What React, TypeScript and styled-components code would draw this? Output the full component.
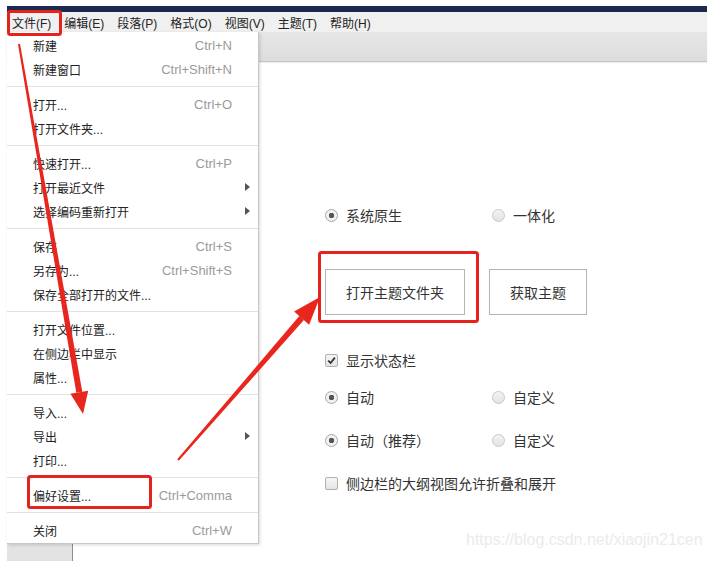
import React from 'react';
import styled, { createGlobalStyle } from 'styled-components';

const GlobalStyle = createGlobalStyle`
  html, body {
    margin: 0;
    padding: 0;
    background: #fff;
  }
  body {
    font-family: "Liberation Sans", "Noto Sans CJK SC", sans-serif;
  }
`;

type MenuEntry =
  | { kind: 'item'; label: string; shortcut?: string; submenu?: boolean }
  | { kind: 'sep' };

const topMenus = ['文件(F)', '编辑(E)', '段落(P)', '格式(O)', '视图(V)', '主题(T)', '帮助(H)'];

const fileMenu: MenuEntry[] = [
  { kind: 'item', label: '新建', shortcut: 'Ctrl+N' },
  { kind: 'item', label: '新建窗口', shortcut: 'Ctrl+Shift+N' },
  { kind: 'sep' },
  { kind: 'item', label: '打开...', shortcut: 'Ctrl+O' },
  { kind: 'item', label: '打开文件夹...' },
  { kind: 'sep' },
  { kind: 'item', label: '快速打开...', shortcut: 'Ctrl+P' },
  { kind: 'item', label: '打开最近文件', submenu: true },
  { kind: 'item', label: '选择编码重新打开', submenu: true },
  { kind: 'sep' },
  { kind: 'item', label: '保存', shortcut: 'Ctrl+S' },
  { kind: 'item', label: '另存为...', shortcut: 'Ctrl+Shift+S' },
  { kind: 'item', label: '保存全部打开的文件...' },
  { kind: 'sep' },
  { kind: 'item', label: '打开文件位置...' },
  { kind: 'item', label: '在侧边栏中显示' },
  { kind: 'item', label: '属性...' },
  { kind: 'sep' },
  { kind: 'item', label: '导入...' },
  { kind: 'item', label: '导出', submenu: true },
  { kind: 'item', label: '打印...' },
  { kind: 'sep' },
  { kind: 'item', label: '偏好设置...', shortcut: 'Ctrl+Comma' },
  { kind: 'sep' },
  { kind: 'item', label: '关闭', shortcut: 'Ctrl+W' },
];

const App = () => {
  return (
    <Page>
      <GlobalStyle />
      <Window>
        <TitleStrip />
        <MenuBar>
          {topMenus.map((m) => (
            <MenuTitle key={m}>{m}</MenuTitle>
          ))}
        </MenuBar>
        <Toolbar />
        <Body>
          <Sidebar />
          <Content>
            <Settings>
              <OptionRow $top={0}>
                <Option>
                  <Radio $checked />
                  系统原生
                </Option>
                <Option>
                  <Radio />
                  一体化
                </Option>
              </OptionRow>
              <ButtonRow>
                <Button>打开主题文件夹</Button>
                <Button>获取主题</Button>
              </ButtonRow>
              <OptionRow $top={33}>
                <Option>
                  <Checkbox>
                    <svg width="9" height="9" viewBox="0 0 9 9">
                      <path d="M1.2 4.6 L3.6 7 L7.9 1.6" fill="none" stroke="#333" strokeWidth="1.8" />
                    </svg>
                  </Checkbox>
                  显示状态栏
                </Option>
              </OptionRow>
              <OptionRow $top={13}>
                <Option>
                  <Radio $checked />
                  自动
                </Option>
                <Option>
                  <Radio />
                  自定义
                </Option>
              </OptionRow>
              <OptionRow $top={19}>
                <Option>
                  <Radio $checked />
                  自动（推荐）
                </Option>
                <Option>
                  <Radio />
                  自定义
                </Option>
              </OptionRow>
              <OptionRow $top={19}>
                <Option>
                  <Checkbox />
                  侧边栏的大纲视图允许折叠和展开
                </Option>
              </OptionRow>
            </Settings>
          </Content>
        </Body>
      </Window>

      <Dropdown>
        {fileMenu.map((e, i) =>
          e.kind === 'sep' ? (
            <Separator key={i} />
          ) : (
            <MenuItem key={i} $submenu={e.submenu}>
              <span>{e.label}</span>
              {e.shortcut && <Shortcut>{e.shortcut}</Shortcut>}
              {e.submenu && <SubArrow />}
            </MenuItem>
          )
        )}
      </Dropdown>

      <Watermark>https://blog.csdn.net/xiaojin21cen</Watermark>

      <Annotations width="712" height="561" viewBox="0 0 712 561">
        <g fill="none" stroke="#e5221c" strokeWidth="3">
          <rect x="8.5" y="11.5" width="52" height="23" rx="2" />
          <rect x="319.5" y="252.5" width="158" height="69" rx="2" />
          <rect x="28.5" y="476.5" width="122" height="31" rx="2" />
        </g>
        <g fill="#e8261e">
          <polygon points="18,44.2 20,43.8 82.3,391.8 76.3,392.8" />
          <polygon points="88.2,390.8 83,414 70.4,393.8" />
          <polygon points="178.8,460.7 177.2,459.3 299.3,316.1 303.9,320.1" />
          <polygon points="309.1,324.7 320,297 294.1,311.5" />
        </g>
      </Annotations>
    </Page>
  );
};

const Page = styled.div`
  position: relative;
  width: 712px;
  height: 561px;
  overflow: hidden;
  background: #fff;
  padding-top: 6px;
  box-sizing: border-box;
`;

const Window = styled.div`
  margin-left: 7px;
  width: 700px;
  height: 555px;
  display: flex;
  flex-direction: column;
  background: #fff;
`;

const TitleStrip = styled.div`
  flex: none;
  height: 6px;
  background: #1d2a4f;
`;

const MenuBar = styled.div`
  flex: none;
  height: 20px;
  display: flex;
  align-items: center;
  gap: 13px;
  padding-left: 5px;
  background: #f0f0f0;
  font-size: 12px;
  color: #222;
`;

const MenuTitle = styled.span`
  white-space: nowrap;
`;

const Toolbar = styled.div`
  flex: none;
  height: 29px;
  background: linear-gradient(#e6e6e6, #dddddd);
  border-bottom: 1px solid #c4c4c4;
  box-shadow: 0 1px 1px rgba(0, 0, 0, 0.06);
`;

const Body = styled.div`
  flex: 1;
  display: flex;
  min-height: 0;
`;

const Sidebar = styled.div`
  width: 65px;
  background: #e3e3e3;
  border-right: 1px solid #8e8e8e;
`;

const Content = styled.div`
  flex: 1;
  padding: 141px 0 0 252px;
`;

const Settings = styled.div`
  display: flex;
  flex-direction: column;
  font-size: 14px;
  color: #333;
`;

const OptionRow = styled.div<{ $top: number }>`
  margin-top: ${({ $top }) => $top}px;
  height: 24px;
  display: grid;
  grid-template-columns: 167px auto;
  align-items: center;
`;

const Option = styled.label`
  display: flex;
  align-items: center;
  gap: 8px;
  white-space: nowrap;
`;

const Radio = styled.span<{ $checked?: boolean }>`
  flex: none;
  width: 11px;
  height: 11px;
  border-radius: 50%;
  border: 1px solid ${({ $checked }) => ($checked ? '#a8a8a8' : '#c8c8c8')};
  background: ${({ $checked }) =>
    $checked
      ? 'radial-gradient(circle, #555 0 2.5px, #f1f1f1 3px)'
      : 'linear-gradient(#f4f4f4, #e2e2e2)'};
`;

const Checkbox = styled.span`
  flex: none;
  width: 11px;
  height: 11px;
  border: 1px solid #b0b0b0;
  border-radius: 2px;
  background: linear-gradient(#f6f6f6, #e4e4e4);
  display: flex;
  align-items: center;
  justify-content: center;
`;

const ButtonRow = styled.div`
  margin-top: 42px;
  display: flex;
  gap: 24px;
`;

const Button = styled.button`
  height: 46px;
  padding: 0 20px;
  border: 1px solid #b4b4b4;
  background: #fff;
  font-family: inherit;
  font-size: 14px;
  color: #333;
`;

const Dropdown = styled.div`
  position: absolute;
  top: 32px;
  left: 7px;
  width: 251px;
  padding: 1px 0;
  background: #fff;
  border-right: 1px solid #c6c6c6;
  border-bottom: 1px solid #c6c6c6;
  box-shadow: 1px 1px 3px rgba(0, 0, 0, 0.15);
  font-size: 12px;
  color: #222;
`;

const MenuItem = styled.div<{ $submenu?: boolean }>`
  height: 24px;
  display: flex;
  align-items: center;
  padding: 0 ${({ $submenu }) => ($submenu ? '8px' : '26px')} 0 26px;
  white-space: nowrap;
`;

const Shortcut = styled.span`
  margin-left: auto;
  font-size: 13px;
  color: #9a9a9a;
`;

const SubArrow = styled.span`
  margin-left: auto;
  width: 0;
  height: 0;
  border-top: 4px solid transparent;
  border-bottom: 4px solid transparent;
  border-left: 5px solid #555;
`;

const Separator = styled.div`
  height: 11px;
  display: flex;
  align-items: center;
  &::after {
    content: '';
    flex: 1;
    height: 1px;
    background: #e2e2e2;
  }
`;

const Watermark = styled.div`
  position: absolute;
  left: 466px;
  top: 531px;
  font-size: 16px;
  color: #ebebeb;
  white-space: nowrap;
`;

const Annotations = styled.svg`
  position: absolute;
  left: 0;
  top: 0;
  pointer-events: none;
`;

export default App;
